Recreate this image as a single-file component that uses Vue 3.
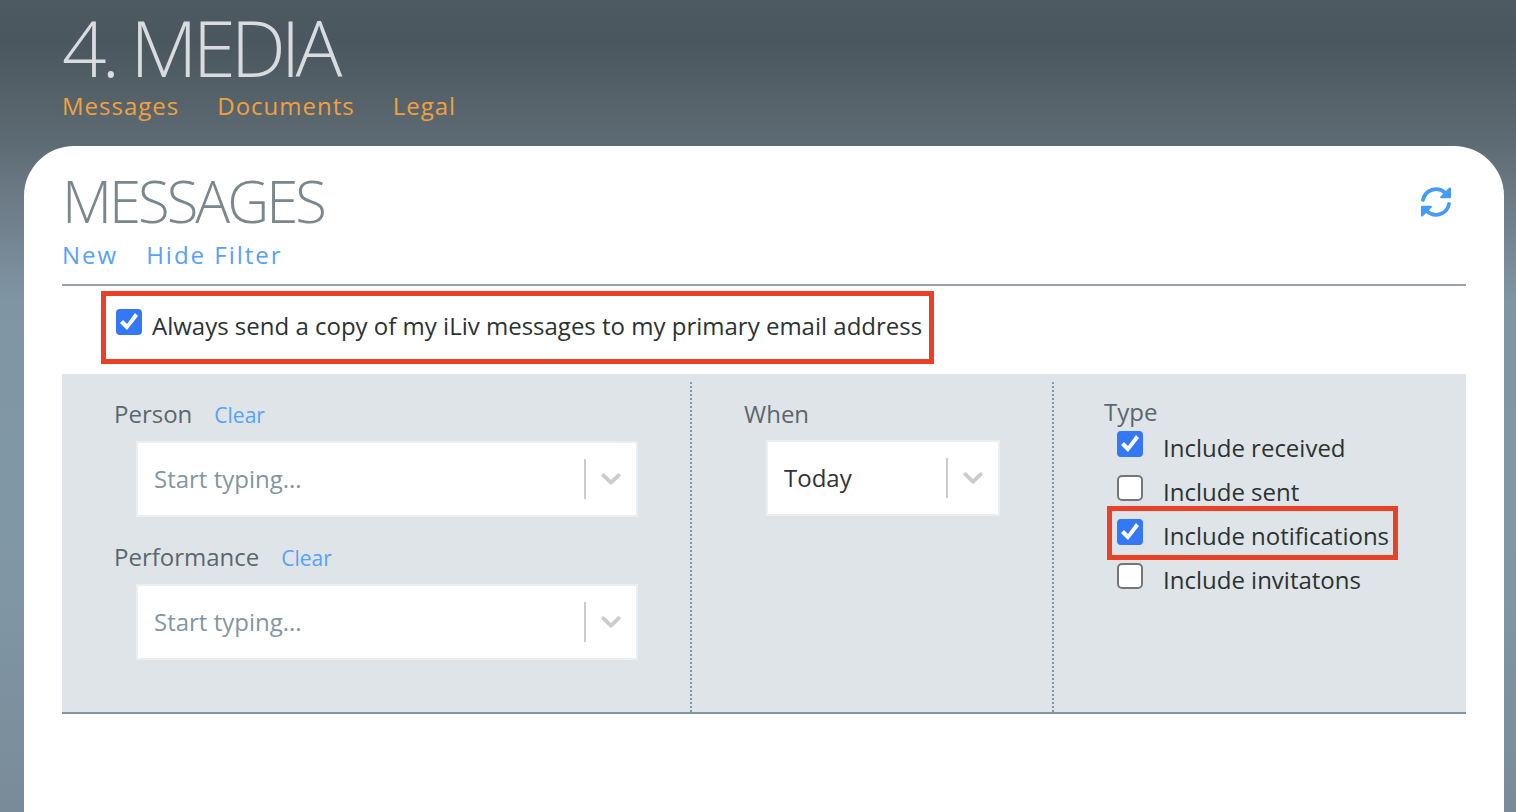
<script setup>
import { ref, reactive } from 'vue'

const sections = ['Messages', 'Documents', 'Legal']
const sendCopy = ref(true)
const person = ref('')
const performance = ref('')
const when = ref('Today')
const filterOpen = ref(true)
const types = reactive([
  { id: 'received', label: 'Include received', on: true, marked: false },
  { id: 'sent', label: 'Include sent', on: false, marked: false },
  { id: 'notifications', label: 'Include notifications', on: true, marked: true },
  { id: 'invitations', label: 'Include invitatons', on: false, marked: false },
])
</script>

<template>
  <div class="page">
    <header class="top">
      <h1>4. MEDIA</h1>
      <nav class="sections">
        <a v-for="s in sections" :key="s" href="#">{{ s }}</a>
      </nav>
    </header>

    <main class="card">
      <div class="card-head">
        <h2>MESSAGES</h2>
        <button class="refresh" type="button" aria-label="Refresh">
          <svg viewBox="0 0 30 30" width="30" height="30" aria-hidden="true">
            <g fill="none" stroke="currentColor" stroke-width="3.8" stroke-linecap="round">
              <path d="M2 13A13.2 13.2 0 0 1 24.2 6" />
              <path d="M28 17A13.2 13.2 0 0 1 5.8 24" />
            </g>
            <path fill="currentColor" d="M28.4.5Q30 0 30 1.8V10Q30 11.2 28.8 11.2H20.4Q18.2 11 19.6 9.3Z" />
            <path fill="currentColor" d="M1.6 29.5Q0 30 0 28.2V20Q0 18.8 1.2 18.8H9.6Q11.8 19 10.4 20.7Z" />
          </svg>
        </button>
      </div>
      <nav class="actions">
        <a href="#">New</a>
        <a href="#" @click.prevent="filterOpen = !filterOpen">Hide Filter</a>
      </nav>

      <label class="copy">
        <input v-model="sendCopy" type="checkbox" />
        <span>Always send a copy of my iLiv messages to my primary email address</span>
      </label>

      <form v-show="filterOpen" class="filter" @submit.prevent>
        <section class="col who">
          <div class="caption">
            <label for="person">Person</label>
            <button type="button" class="clear" @click="person = ''">Clear</button>
          </div>
          <div class="field">
            <input id="person" v-model="person" type="text" placeholder="Start typing..." />
            <svg class="chevron" viewBox="0 0 20 20" width="40" height="40" aria-hidden="true"><path d="M6.2 8.2 10 11.8 13.8 8.2" /></svg>
          </div>
          <div class="caption">
            <label for="performance">Performance</label>
            <button type="button" class="clear" @click="performance = ''">Clear</button>
          </div>
          <div class="field">
            <input id="performance" v-model="performance" type="text" placeholder="Start typing..." />
            <svg class="chevron" viewBox="0 0 20 20" width="40" height="40" aria-hidden="true"><path d="M6.2 8.2 10 11.8 13.8 8.2" /></svg>
          </div>
        </section>

        <section class="col date">
          <div class="caption"><label for="when">When</label></div>
          <div class="field">
            <select id="when" v-model="when"><option>Today</option></select>
            <svg class="chevron" viewBox="0 0 20 20" width="40" height="40" aria-hidden="true"><path d="M6.2 8.2 10 11.8 13.8 8.2" /></svg>
          </div>
        </section>

        <fieldset class="col kind">
          <legend>Type</legend>
          <label v-for="t in types" :key="t.id" class="option" :class="{ marked: t.marked }">
            <input v-model="t.on" type="checkbox" />
            <span>{{ t.label }}</span>
          </label>
        </fieldset>
      </form>
    </main>
  </div>
</template>

<style>
body {
  background: #7a8d9a;
}
</style>

<style scoped>
* {
  box-sizing: border-box;
}
.page {
  display: flex;
  flex-direction: column;
  min-height: 100vh;
  font: 24px/32px "Open Sans", "Noto Sans", sans-serif;
  color: #2b3332;
  background: linear-gradient(#4e5a61 0, #4b575e 40px, #505c63 70px, #5e6c75 146px, #6c7b86 200px, #7f95a3 300px, #8097a5 500px, #7f95a3 620px, #798b98 812px);
}
.top {
  padding: 7px 62px 24px;
}
h1,
h2 {
  margin: 0;
  font-weight: 300;
}
h1 {
  margin-bottom: 3px;
  font-size: 78px;
  line-height: 80px;
  letter-spacing: -5px;
  color: #d9dcde;
}
h2 {
  font-size: 58px;
  line-height: 60px;
  letter-spacing: -3px;
  color: #7a878c;
}
a {
  text-decoration: none;
}
.sections,
.actions {
  display: flex;
}
.sections {
  gap: 38px;
  letter-spacing: 1px;
}
.sections a {
  color: #f2a03d;
}
.card {
  flex: 1;
  margin: 0 12px 0 24px;
  padding: 25px 38px;
  border-radius: 50px 50px 0 0;
  background: #fff;
}
.card-head {
  display: flex;
  justify-content: space-between;
  align-items: center;
}
.refresh {
  display: flex;
  margin-right: 15px;
  padding: 2px 0 0;
  border: 0;
  background: none;
  color: #459afb;
}
.actions {
  gap: 28px;
  padding: 8px 0 13px;
  border-bottom: 2px solid #9aa3ab;
  letter-spacing: 2px;
}
.actions a,
.clear {
  color: #57a1fb;
}
.copy {
  display: flex;
  width: fit-content;
  gap: 10px;
  margin: 5px 0 10px 39px;
  padding: 13px 7px 17px 10px;
  border: 5px solid #ea4025;
}
input[type="checkbox"] {
  flex: none;
  width: 26px;
  height: 26px;
  margin: 0;
  appearance: none;
  border: 2px solid #767676;
  border-radius: 5px;
  background: #fff;
}
input[type="checkbox"]:checked {
  border: 0;
  border-radius: 4px;
  background: #3478f6;
}
input[type="checkbox"]:checked::before {
  content: "";
  display: block;
  width: 26px;
  height: 26px;
  background: #fff;
  clip-path: polygon(4px 14px, 7px 11px, 11px 15px, 19px 4px, 22px 7px, 11px 21px);
}
.copy span {
  padding-top: 1px;
}
.filter {
  display: grid;
  grid-template-columns: 630fr 362fr 412fr;
  padding-top: 8px;
  border-bottom: 2px solid #8296a3;
  background: #dfe4e8;
}
.col {
  min-width: 0;
  margin: 0;
  padding: 16px 52px 52px;
  border: 0;
}
.who,
.date {
  border-right: 2px dotted #8296a3;
}
.caption {
  display: flex;
  gap: 22px;
  margin-bottom: 11px;
  color: #5a686e;
}
.date .caption {
  margin-bottom: 10px;
}
.clear {
  height: 32px;
  padding: 0;
  border: 0;
  background: none;
  font-family: inherit;
  font-size: 21px;
  line-height: 34px;
}
.field {
  position: relative;
  display: flex;
  margin: 0 0 24px 22px;
}
.who .field:last-child {
  margin-bottom: 0;
}
.field input,
.field select {
  width: 100%;
  height: 76px;
  padding: 0 70px 0 16px;
  appearance: none;
  border: 2px solid #eceff1;
  border-radius: 0;
  background: #fff;
  font: inherit;
  color: #333;
}
.field input {
  padding-bottom: 2px;
}
.field input::placeholder {
  color: #8296a3;
  opacity: 1;
}
.chevron {
  position: absolute;
  top: 18px;
  right: 7px;
  box-sizing: content-box;
  padding-left: 5px;
  border-left: 2px solid #ccc;
  fill: none;
  stroke: #ccc;
  stroke-width: 2;
  stroke-linecap: round;
  stroke-linejoin: round;
  pointer-events: none;
}
.kind {
  padding: 0 50px;
}
legend {
  padding: 14px 0 0;
  color: #5a686e;
}
.option {
  position: relative;
  display: flex;
  gap: 20px;
  width: fit-content;
  height: 44px;
  padding: 3px 0 0 13px;
  white-space: nowrap;
}
.option span {
  padding-top: 1px;
}
.marked::after {
  content: "";
  position: absolute;
  inset: -10px -9px 0 3px;
  border: 5px solid #ea4025;
  pointer-events: none;
}
</style>
